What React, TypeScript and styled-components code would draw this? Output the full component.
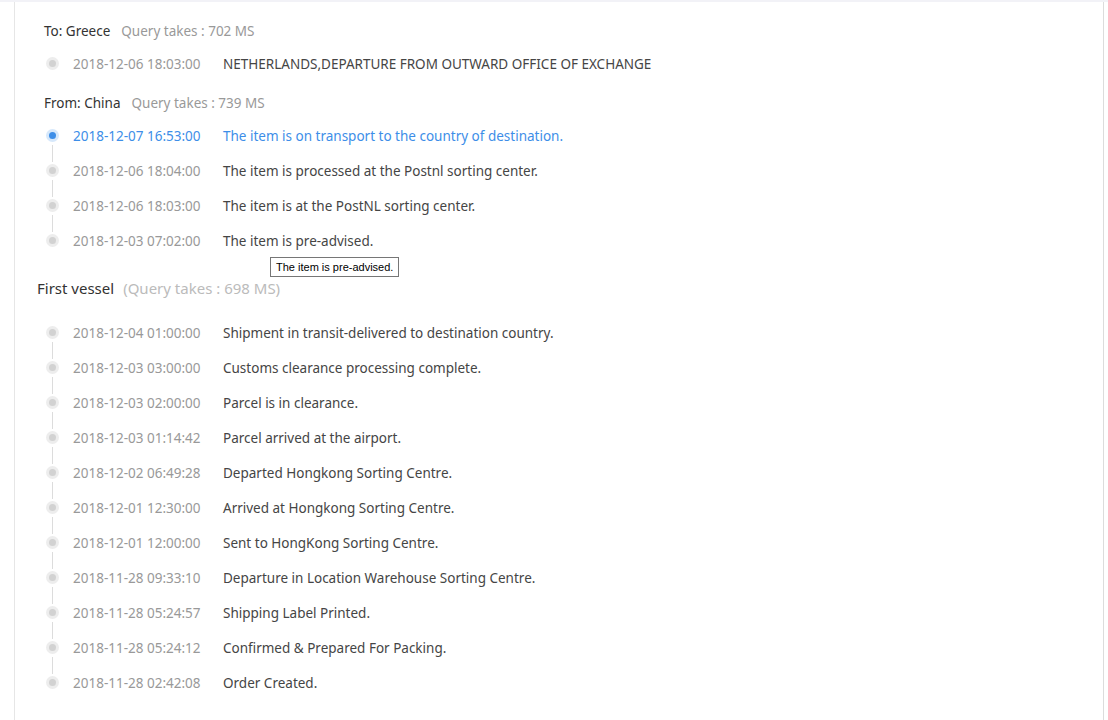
import styled, { createGlobalStyle } from 'styled-components';

type Event = { time: string; text: string };

type Group = {
  title: string;
  took: string;
  events: Event[];
};

const carrierGroups: Group[] = [
  {
    title: 'To: Greece',
    took: 'Query takes : 702 MS',
    events: [
      { time: '2018-12-06 18:03:00', text: 'NETHERLANDS,DEPARTURE FROM OUTWARD OFFICE OF EXCHANGE' },
    ],
  },
  {
    title: 'From: China',
    took: 'Query takes : 739 MS',
    events: [
      { time: '2018-12-07 16:53:00', text: 'The item is on transport to the country of destination.' },
      { time: '2018-12-06 18:04:00', text: 'The item is processed at the Postnl sorting center.' },
      { time: '2018-12-06 18:03:00', text: 'The item is at the PostNL sorting center.' },
      { time: '2018-12-03 07:02:00', text: 'The item is pre-advised.' },
    ],
  },
];

const vesselEvents: Event[] = [
  { time: '2018-12-04 01:00:00', text: 'Shipment in transit-delivered to destination country.' },
  { time: '2018-12-03 03:00:00', text: 'Customs clearance processing complete.' },
  { time: '2018-12-03 02:00:00', text: 'Parcel is in clearance.' },
  { time: '2018-12-03 01:14:42', text: 'Parcel arrived at the airport.' },
  { time: '2018-12-02 06:49:28', text: 'Departed Hongkong Sorting Centre.' },
  { time: '2018-12-01 12:30:00', text: 'Arrived at Hongkong Sorting Centre.' },
  { time: '2018-12-01 12:00:00', text: 'Sent to HongKong Sorting Centre.' },
  { time: '2018-11-28 09:33:10', text: 'Departure in Location Warehouse Sorting Centre.' },
  { time: '2018-11-28 05:24:57', text: 'Shipping Label Printed.' },
  { time: '2018-11-28 05:24:12', text: 'Confirmed & Prepared For Packing.' },
  { time: '2018-11-28 02:42:08', text: 'Order Created.' },
];

const GlobalStyle = createGlobalStyle`
  html, body {
    margin: 0;
    padding: 0;
    background: #fff;
  }
  body {
    font-family: "Noto Sans", "Open Sans", Arial, sans-serif;
  }
`;

const Page = styled.div`
  border-top: 2px solid #f2f2f7;
  height: 718px;
  overflow: hidden;
`;

const Panel = styled.div`
  margin-left: 14px;
  width: 1090px;
  height: 100%;
  border-left: 1px solid #e6e6e6;
  border-right: 1px solid #dcdcdc;
  padding: 19px 0 0 29px;
  box-sizing: border-box;
`;

const GroupHead = styled.div`
  display: flex;
  gap: 11px;
  font-size: 13.5px;
  line-height: 20px;
  color: #333;
  margin-bottom: 16px;
`;

const Took = styled.span`
  color: #999;
`;

const Timeline = styled.ul`
  list-style: none;
  margin: 0 0 1px 2px;
  padding: 0;
`;

const Row = styled.li`
  position: relative;
  display: flex;
  height: 35px;
`;

const Marker = styled.div`
  display: flex;
  flex-direction: column;
  align-items: center;
  width: 13px;
  margin-right: 14px;
`;

const Dot = styled.span<{ $active?: boolean }>`
  display: flex;
  align-items: center;
  justify-content: center;
  width: 13px;
  height: 13px;
  border-radius: 50%;
  background: ${(p) => (p.$active ? '#d6e8fb' : '#ededed')};

  &::before {
    content: '';
    width: 7px;
    height: 7px;
    border-radius: 50%;
    background: ${(p) => (p.$active ? '#3d8ee8' : '#d2d2d2')};
  }
`;

const Tail = styled.span<{ $hidden?: boolean }>`
  flex: 1;
  width: 1px;
  margin: 3px 0 2px;
  background: ${(p) => (p.$hidden ? 'transparent' : '#dcdcdc')};
`;

const Time = styled.span<{ $active?: boolean }>`
  width: 150px;
  padding-top: 1px;
  font-size: 13.5px;
  line-height: 13px;
  color: ${(p) => (p.$active ? '#3d8ee8' : '#999')};
  white-space: nowrap;
`;

const Text = styled.span<{ $active?: boolean }>`
  padding-top: 1px;
  font-size: 13.5px;
  line-height: 13px;
  color: ${(p) => (p.$active ? '#3d8ee8' : '#454545')};
  white-space: nowrap;
`;

const Tooltip = styled.div`
  position: absolute;
  left: 224px;
  top: 23px;
  padding: 2px 5px;
  border: 1px solid #767676;
  background: #fff;
  color: #000;
  font-family: "Liberation Sans", Arial, sans-serif;
  font-size: 11px;
  line-height: 14px;
  white-space: nowrap;
  z-index: 2;
`;

const VesselHead = styled.div`
  display: flex;
  gap: 9px;
  margin: 8px 0 27px -7px;
  font-size: 15px;
  line-height: 22px;
  color: #333;
`;

const VesselTook = styled.span`
  color: #bbb;
`;

type ListProps = { events: Event[]; activeFirst?: boolean; tooltipAt?: number };

const EventList = ({ events, activeFirst, tooltipAt }: ListProps) => (
  <Timeline>
    {events.map((e, i) => {
      const active = activeFirst && i === 0;
      return (
        <Row key={e.time + i}>
          <Marker>
            <Dot $active={active} />
            <Tail $hidden={i === events.length - 1} />
          </Marker>
          <Time $active={active}>{e.time}</Time>
          <Text $active={active}>{e.text}</Text>
          {tooltipAt === i && <Tooltip>{e.text}</Tooltip>}
        </Row>
      );
    })}
  </Timeline>
);

const App = () => {
  return (
    <>
      <GlobalStyle />
      <Page>
        <Panel>
          {carrierGroups.map((g, gi) => (
            <section key={g.title}>
              <GroupHead>
                <span>{g.title}</span>
                <Took>{g.took}</Took>
              </GroupHead>
              <EventList events={g.events} activeFirst={gi === 1} tooltipAt={gi === 1 ? 3 : undefined} />
            </section>
          ))}
          <VesselHead>
            <span>First vessel</span>
            <VesselTook>(Query takes : 698 MS)</VesselTook>
          </VesselHead>
          <EventList events={vesselEvents} />
        </Panel>
      </Page>
    </>
  );
};

export default App;
